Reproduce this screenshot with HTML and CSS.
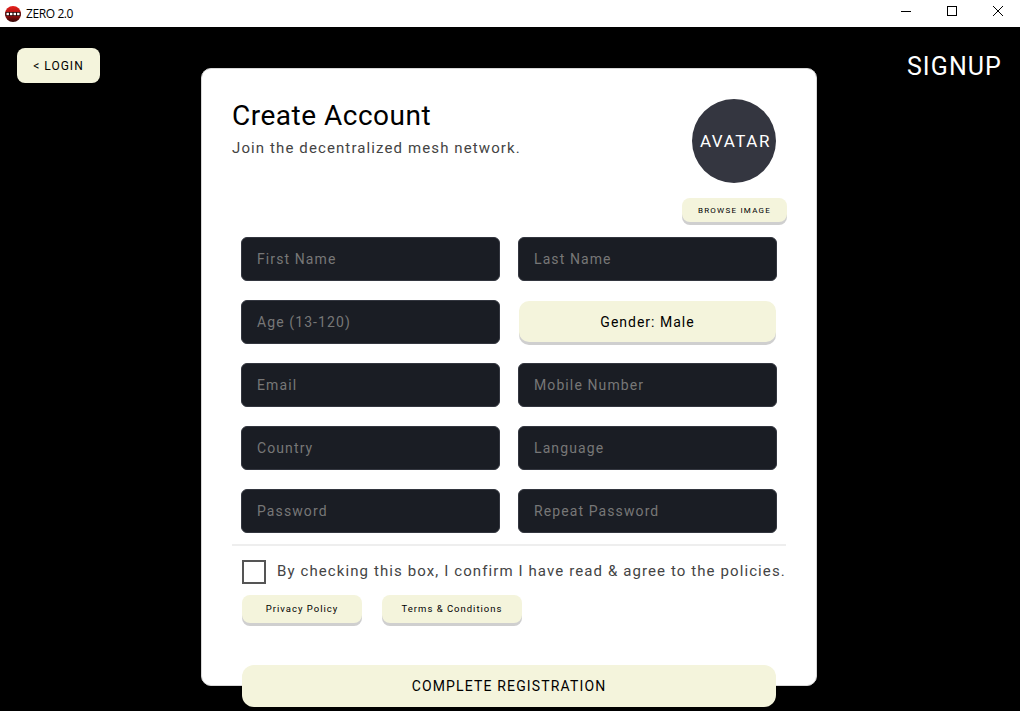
FILE: index.html
```html
<!DOCTYPE html>
<html lang="en">
<head>
<meta charset="utf-8">
<title>ZERO 2.0</title>
<link rel="stylesheet" href="styles.css">
</head>
<body>
<header class="titlebar">
  <div class="app-id">
    <svg class="app-logo" viewBox="0 0 16 16" width="16" height="16" aria-hidden="true">
      <defs><linearGradient id="logoShade" x1="0" y1="0" x2="0" y2="1"><stop offset="0" stop-color="#e8201c"/><stop offset="0.55" stop-color="#a01010"/><stop offset="1" stop-color="#300505"/></linearGradient></defs>
      <circle cx="8" cy="8" r="8" fill="url(#logoShade)"/>
      <rect x="0.5" y="6" width="15" height="4" fill="#2a0808"/>
      <rect x="1.5" y="6.8" width="2.4" height="2.4" fill="#fff"/>
      <rect x="5" y="6.8" width="2.4" height="2.4" fill="#fff"/>
      <rect x="8.6" y="6.8" width="2.4" height="2.4" fill="#fff"/>
      <rect x="12.1" y="6.8" width="2.4" height="2.4" fill="#fff"/>
    </svg>
    <span class="app-name">ZERO 2.0</span>
  </div>
  <div class="win-controls">
    <span class="win-btn"><svg width="12" height="12" viewBox="0 0 12 12"><path d="M1 6.5H11" stroke="#000" fill="none"/></svg></span>
    <span class="win-btn"><svg width="12" height="12" viewBox="0 0 12 12"><rect x="1.5" y="1.5" width="9" height="9" stroke="#000" fill="none"/></svg></span>
    <span class="win-btn"><svg width="12" height="12" viewBox="0 0 12 12"><path d="M1 1L11 11M11 1L1 11" stroke="#000" fill="none"/></svg></span>
  </div>
</header>

<main class="stage">
  <div class="left-col"><button class="login-btn">&lt; LOGIN</button></div>

  <section class="card">
    <div class="card-head">
      <div class="head-text">
        <h1>Create Account</h1>
        <p>Join the decentralized mesh network.</p>
      </div>
      <div class="avatar-col">
        <div class="avatar">AVATAR</div>
        <button class="btn3d browse">BROWSE IMAGE</button>
      </div>
    </div>

    <div class="fields">
      <div class="field">First Name</div>
      <div class="field">Last Name</div>
      <div class="field">Age (13-120)</div>
      <button class="btn3d gender">Gender: Male</button>
      <div class="field">Email</div>
      <div class="field">Mobile Number</div>
      <div class="field">Country</div>
      <div class="field">Language</div>
      <div class="field">Password</div>
      <div class="field">Repeat Password</div>
    </div>

    <hr class="divider">

    <div class="agree">
      <span class="checkbox"></span>
      <span class="agree-text">By checking this box, I confirm I have read &amp; agree to the policies.</span>
    </div>

    <div class="policies">
      <button class="btn3d policy privacy">Privacy Policy</button>
      <button class="btn3d policy terms">Terms &amp; Conditions</button>
    </div>

    <button class="complete">COMPLETE REGISTRATION</button>
  </section>

  <div class="right-col"><div class="signup">SIGNUP</div></div>
</main>
</body>
</html>
```

FILE: styles.css
```css
* { box-sizing: border-box; }
html, body { margin: 0; height: 100%; }
body {
  width: 1020px;
  height: 711px;
  overflow: hidden;
  background: #000;
  font-family: Roboto, "Liberation Sans", sans-serif;
  display: flex;
  flex-direction: column;
}
button { font-family: inherit; border: 0; padding: 0; cursor: pointer; color: #000; }

.titlebar {
  height: 27px;
  background: #fff;
  display: flex;
  justify-content: space-between;
  align-items: center;
  flex: none;
}
.app-id { display: flex; align-items: center; padding-left: 5px; gap: 5px; }
.app-logo { display: block; }
.app-name { font: 12px "Open Sans", "Liberation Sans", sans-serif; color: #000; letter-spacing: -0.4px; }
.win-controls { display: flex; align-self: flex-start; }
.win-btn { width: 46px; height: 22px; padding-left: 1px; display: flex; align-items: center; justify-content: center; }
.win-btn svg { display: block; }

.stage {
  flex: 1;
  display: grid;
  grid-template-columns: 201px 616px 203px;
  align-items: start;
}
.left-col { padding: 21px 0 0 17px; }
.login-btn {
  width: 83px;
  height: 35px;
  background: #f4f4dc;
  border-radius: 8px;
  font-size: 12px;
  letter-spacing: 1px;
}
.right-col { padding: 25px 18px 0 0; text-align: right; }
.signup { color: #fff; font-size: 25px; font-weight: 400; line-height: 30px; letter-spacing: 1.1px; }

.card {
  margin-top: 41px;
  height: 618px;
  background: #fff;
  border-radius: 10px;
  padding: 30px 29px 0 30px;
  display: flex;
  flex-direction: column;
  border: 1px solid #d8d8d8;
}
.card > * { flex: none; }
.card-head { display: flex; justify-content: space-between; height: 138px; }
.head-text h1 { margin: 0; font-size: 28px; font-weight: 400; line-height: 33px; letter-spacing: 0.5px; color: #000; }
.head-text p { margin: 7px 0 0; font-size: 15px; line-height: 18px; letter-spacing: 1.11px; color: #444; }
.avatar-col { display: flex; flex-direction: column; align-items: center; width: 105px; }
.avatar {
  width: 84px;
  height: 84px;
  margin-right: 1px;
  padding-left: 3px;
  border-radius: 50%;
  background: #343640;
  color: #fff;
  font-size: 17px;
  letter-spacing: 1.6px;
  display: flex;
  align-items: center;
  justify-content: center;
}
.btn3d {
  background: #f4f4dc;
  box-shadow: 0 3px 0 #cfcfcf;
  border-radius: 8px;
}
.browse { margin-top: 15px; width: 105px; height: 24px; font-size: 8px; letter-spacing: 1.25px; }

.fields {
  margin-left: 9px;
  width: 536px;
  display: grid;
  grid-template-columns: 259px 259px;
  column-gap: 18px;
  row-gap: 19px;
}
.field {
  height: 44px;
  background: #1a1d24;
  border: 1px solid #33363f;
  border-radius: 6px;
  color: #777;
  font-size: 14px;
  letter-spacing: 1.1px;
  line-height: 42px;
  padding-left: 15px;
}
.gender {
  margin: 1px;
  height: 41px;
  border-radius: 10px;
  font-size: 14px;
  letter-spacing: 1px;
}

.divider { margin: 11px 0 0; width: 554px; height: 2px; border: 0; background: #eee; }
.agree { margin: 14px 0 0 10px; display: flex; align-items: center; height: 24px; gap: 11px; }
.checkbox { width: 24px; height: 24px; border: 2px solid #555; flex: none; }
.agree-text { font-size: 15px; letter-spacing: 1.1px; color: #444; white-space: nowrap; padding-bottom: 2px; }

.policies { margin: 11px 0 0 10px; display: flex; gap: 20px; }
.policy { height: 28px; font-size: 9.5px; letter-spacing: 1px; padding-bottom: 2px; }
.privacy { width: 120px; }
.terms { width: 140px; }

.complete {
  margin: 42px 0 0 10px;
  width: 534px;
  height: 42px;
  background: #f4f4dc;
  border-radius: 12px;
  font-size: 14px;
  letter-spacing: 1.15px;
}
```
